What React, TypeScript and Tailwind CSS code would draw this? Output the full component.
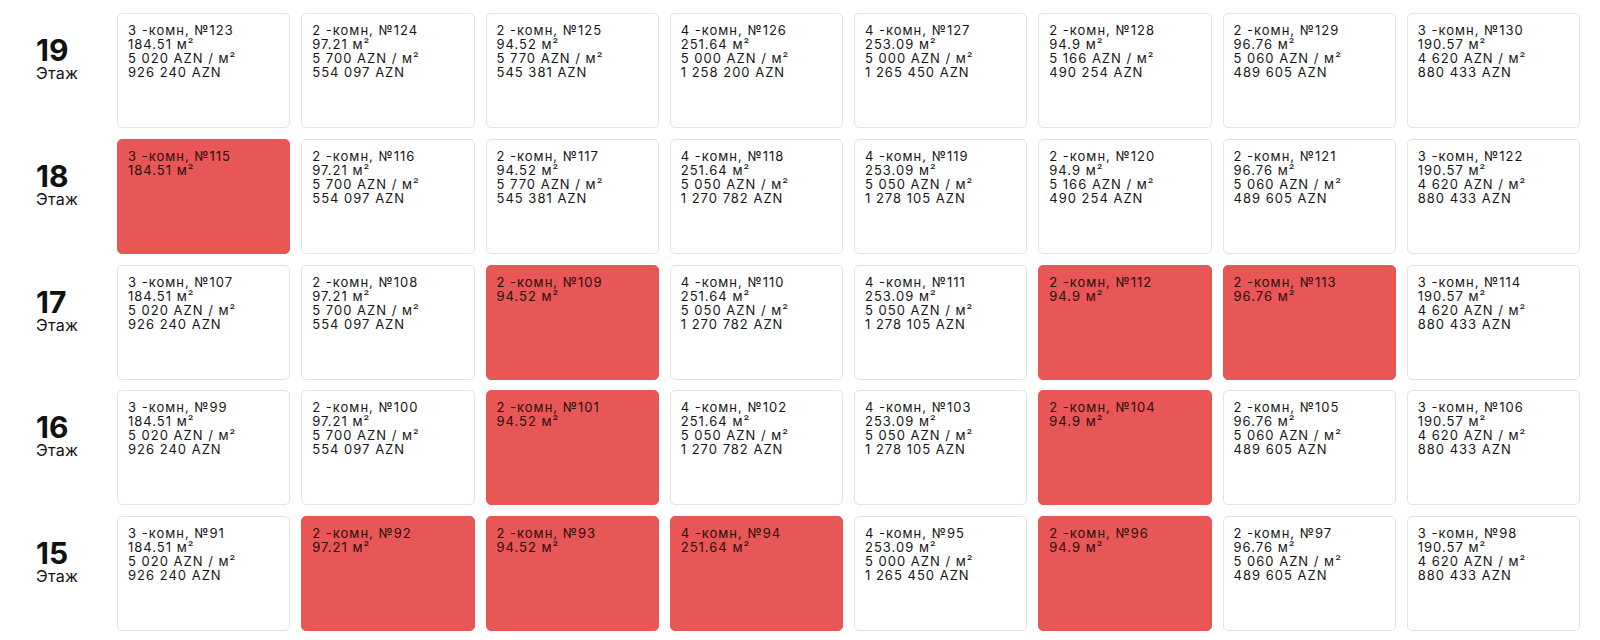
type Flat = {
  rooms: number;
  num: number;
  area: string;
  price?: string;
  total?: string;
  sold?: boolean;
};

type Floor = {
  floor: number;
  flats: Flat[];
};

const floors: Floor[] = [
  {
    floor: 19,
    flats: [
      { rooms: 3, num: 123, area: "184.51", price: "5 020", total: "926 240" },
      { rooms: 2, num: 124, area: "97.21", price: "5 700", total: "554 097" },
      { rooms: 2, num: 125, area: "94.52", price: "5 770", total: "545 381" },
      { rooms: 4, num: 126, area: "251.64", price: "5 000", total: "1 258 200" },
      { rooms: 4, num: 127, area: "253.09", price: "5 000", total: "1 265 450" },
      { rooms: 2, num: 128, area: "94.9", price: "5 166", total: "490 254" },
      { rooms: 2, num: 129, area: "96.76", price: "5 060", total: "489 605" },
      { rooms: 3, num: 130, area: "190.57", price: "4 620", total: "880 433" },
    ],
  },
  {
    floor: 18,
    flats: [
      { rooms: 3, num: 115, area: "184.51", sold: true },
      { rooms: 2, num: 116, area: "97.21", price: "5 700", total: "554 097" },
      { rooms: 2, num: 117, area: "94.52", price: "5 770", total: "545 381" },
      { rooms: 4, num: 118, area: "251.64", price: "5 050", total: "1 270 782" },
      { rooms: 4, num: 119, area: "253.09", price: "5 050", total: "1 278 105" },
      { rooms: 2, num: 120, area: "94.9", price: "5 166", total: "490 254" },
      { rooms: 2, num: 121, area: "96.76", price: "5 060", total: "489 605" },
      { rooms: 3, num: 122, area: "190.57", price: "4 620", total: "880 433" },
    ],
  },
  {
    floor: 17,
    flats: [
      { rooms: 3, num: 107, area: "184.51", price: "5 020", total: "926 240" },
      { rooms: 2, num: 108, area: "97.21", price: "5 700", total: "554 097" },
      { rooms: 2, num: 109, area: "94.52", sold: true },
      { rooms: 4, num: 110, area: "251.64", price: "5 050", total: "1 270 782" },
      { rooms: 4, num: 111, area: "253.09", price: "5 050", total: "1 278 105" },
      { rooms: 2, num: 112, area: "94.9", sold: true },
      { rooms: 2, num: 113, area: "96.76", sold: true },
      { rooms: 3, num: 114, area: "190.57", price: "4 620", total: "880 433" },
    ],
  },
  {
    floor: 16,
    flats: [
      { rooms: 3, num: 99, area: "184.51", price: "5 020", total: "926 240" },
      { rooms: 2, num: 100, area: "97.21", price: "5 700", total: "554 097" },
      { rooms: 2, num: 101, area: "94.52", sold: true },
      { rooms: 4, num: 102, area: "251.64", price: "5 050", total: "1 270 782" },
      { rooms: 4, num: 103, area: "253.09", price: "5 050", total: "1 278 105" },
      { rooms: 2, num: 104, area: "94.9", sold: true },
      { rooms: 2, num: 105, area: "96.76", price: "5 060", total: "489 605" },
      { rooms: 3, num: 106, area: "190.57", price: "4 620", total: "880 433" },
    ],
  },
  {
    floor: 15,
    flats: [
      { rooms: 3, num: 91, area: "184.51", price: "5 020", total: "926 240" },
      { rooms: 2, num: 92, area: "97.21", sold: true },
      { rooms: 2, num: 93, area: "94.52", sold: true },
      { rooms: 4, num: 94, area: "251.64", sold: true },
      { rooms: 4, num: 95, area: "253.09", price: "5 000", total: "1 265 450" },
      { rooms: 2, num: 96, area: "94.9", sold: true },
      { rooms: 2, num: 97, area: "96.76", price: "5 060", total: "489 605" },
      { rooms: 3, num: 98, area: "190.57", price: "4 620", total: "880 433" },
    ],
  },
];

function FlatCard({ flat }: { flat: Flat }) {
  return (
    <div
      className={`h-[115px] rounded-[5px] border px-[10px] pt-[9px] text-[13px] leading-[14px] tracking-[1px] ${
        flat.sold
          ? "bg-[#e85656] border-[#e85656] text-[#2a0d0d]"
          : "bg-white border-[#e3e3e3] text-[#161616]"
      }`}
    >
      <div>
        {flat.rooms} -комн, №{flat.num}
      </div>
      <div>{flat.area} м²</div>
      {!flat.sold && (
        <>
          <div>{flat.price} AZN / м²</div>
          <div>{flat.total} AZN</div>
        </>
      )}
    </div>
  );
}

export default function App() {
  return (
    <div
      className="min-h-screen bg-white pt-[13px] pr-[20px]"
      style={{ fontFamily: "Inter, 'Noto Sans', sans-serif" }}
    >
      <div className="flex flex-col gap-y-[10.75px]">
        {floors.map((f) => (
          <div key={f.floor} className="flex gap-x-[11px]">
            {/* floor label */}
            <div className="w-[106px] shrink-0 pl-[36px] pt-[26px] text-[#111]">
              <div className="text-[30px] font-bold leading-[22px]">{f.floor}</div>
              <div className="mt-[6px] text-base leading-[12px] tracking-[0.3px]">Этаж</div>
            </div>
            <div className="grid flex-1 grid-cols-8 gap-x-[11px]">
              {f.flats.map((flat) => (
                <FlatCard key={flat.num} flat={flat} />
              ))}
            </div>
          </div>
        ))}
      </div>
    </div>
  );
}
